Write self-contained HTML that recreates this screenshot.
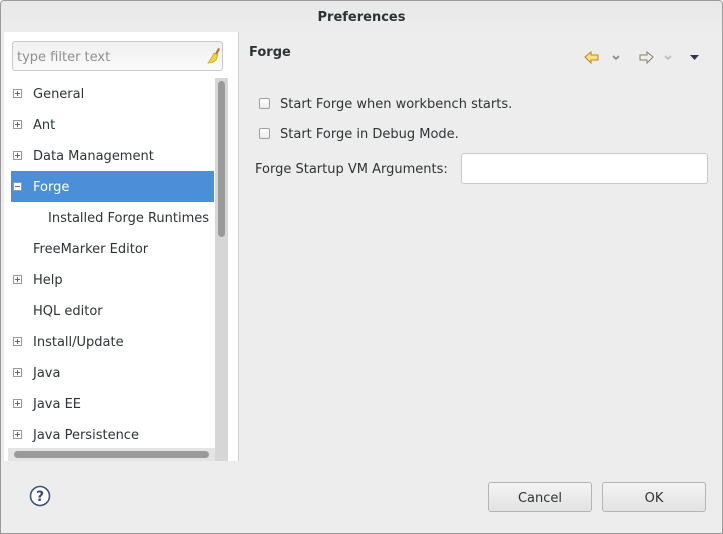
<!DOCTYPE html>
<html><head><style>
body{margin:0;width:723px;height:534px;overflow:hidden;font-family:"DejaVu Sans","Liberation Sans",sans-serif;font-size:13px;color:#2e3436}
.win{position:absolute;left:0;top:0;width:721px;height:532px;border:1px solid #9a9a9a;border-radius:4px 4px 0 0;background:#ededed;overflow:hidden}
.title{position:absolute;left:0;top:0;width:721px;height:32px;background:linear-gradient(#e8e8e8,#ededed);text-align:center;line-height:34px;font-weight:bold;font-size:13px;color:#2e3436}
.left{position:absolute;left:3px;top:31px;width:234px;height:429px;background:#fff;border-right:1px solid #d0d0d0}
.filter{position:absolute;left:8px;top:9px;width:211px;height:30px;border:1px solid #c8c8c8;border-radius:3px;background:linear-gradient(#f0f0f0,#fafafa);color:#909090;line-height:31px;padding-left:4px;box-sizing:border-box;font-size:13px}
.row{position:absolute;left:7px;width:203px;height:31px;line-height:33px;white-space:nowrap;overflow:hidden}
.row.sel{background:#4a90d9;color:#fff}
.pm{position:absolute;left:2px;top:11px;width:9px;height:9px;border:1px solid #9a9a9a;box-sizing:border-box;background:#fff}
.pm:before{content:"";position:absolute;left:1px;top:3px;width:5px;height:1px;background:#666}
.pm.p:after{content:"";position:absolute;left:3px;top:1px;width:1px;height:5px;background:#666}
.vs{position:absolute;left:211px;top:46px;width:13px;height:383px;background:#d6d6d6}
.vt{position:absolute;left:3px;top:3px;width:7px;height:156px;border-radius:4px;background:#9a9a9a}
.hs{position:absolute;left:4px;top:416px;width:207px;height:13px;background:#e4e4e4}
.ht{position:absolute;left:6px;top:3px;width:195px;height:7px;border-radius:4px;background:#9a9a9a}
.cb{position:absolute;left:259px;width:11px;height:11px;border:1px solid #a0a0a0;border-radius:2px;background:linear-gradient(#fff,#ececec);box-sizing:border-box}
.btn{position:absolute;top:481px;width:104px;height:30px;border:1px solid #b4b4b4;border-radius:3px;background:linear-gradient(#f4f4f4,#e2e2e2);text-align:center;line-height:31px;box-sizing:border-box}
.t{position:absolute}
</style></head><body>
<div class="win">
<div class="title">Preferences</div>
<div class="left">
<div class="filter">type filter text</div>
<svg style="position:absolute;left:202px;top:15px" width="16" height="18" viewBox="0 0 16 18"><path d="M12 1l2 1-3 6-2-1z" fill="#a87a2a"/><path d="M8 6l4 2-2 5c-2 2-5 3-8 3 2-2 3-5 6-10z" fill="#f2d23a" stroke="#c8a020" stroke-width=".7"/></svg>
<div class="row" style="top:46px"><span class="pm p"></span><span class="t" style="left:22px">General</span></div>
<div class="row" style="top:77px"><span class="pm p"></span><span class="t" style="left:22px">Ant</span></div>
<div class="row" style="top:108px"><span class="pm p"></span><span class="t" style="left:22px">Data Management</span></div>
<div class="row sel" style="top:139px"><span class="pm"></span><span class="t" style="left:22px">Forge</span></div>
<div class="row" style="top:170px"><span class="t" style="left:37px">Installed Forge Runtimes</span></div>
<div class="row" style="top:201px"><span class="t" style="left:22px">FreeMarker Editor</span></div>
<div class="row" style="top:232px"><span class="pm p"></span><span class="t" style="left:22px">Help</span></div>
<div class="row" style="top:263px"><span class="t" style="left:22px">HQL editor</span></div>
<div class="row" style="top:294px"><span class="pm p"></span><span class="t" style="left:22px">Install/Update</span></div>
<div class="row" style="top:325px"><span class="pm p"></span><span class="t" style="left:22px">Java</span></div>
<div class="row" style="top:356px"><span class="pm p"></span><span class="t" style="left:22px">Java EE</span></div>
<div class="row" style="top:387px"><span class="pm p"></span><span class="t" style="left:22px">Java Persistence</span></div>
<div class="vs"><div class="vt"></div></div>
<div class="hs"><div class="ht"></div></div>
</div>
<div style="position:absolute;left:248px;top:44px;font-weight:bold">Forge</div>
<svg style="position:absolute;left:583px;top:49px" width="120" height="16" viewBox="0 0 120 16">
<path d="M1 7l6-5v3h7v5H7v3z" fill="#fbe08a" stroke="#c08a10"/>
<path d="M29 6l3 3 3-3" fill="none" stroke="#888" stroke-width="1.6"/>
<path d="M69 7l-6-5v3h-7v5h7v3z" fill="#eee" stroke="#8a8060"/>
<path d="M81 6l3 3 3-3" fill="none" stroke="#bbb" stroke-width="1.6"/>
<path d="M106 5h9l-4.5 5z" fill="#333355"/>
</svg>
<div class="cb" style="top:97px;left:258px"></div><div class="t" style="left:279px;top:96px">Start Forge when workbench starts.</div>
<div class="cb" style="top:127px;left:258px"></div><div class="t" style="left:279px;top:126px">Start Forge in Debug Mode.</div>
<div class="t" style="left:254px;top:161px">Forge Startup VM Arguments:</div>
<div style="position:absolute;left:460px;top:152px;width:247px;height:31px;border:1px solid #c8c8c8;border-radius:3px;background:#fff;box-sizing:border-box"></div>
<svg style="position:absolute;left:28px;top:484px" width="22" height="22" viewBox="0 0 22 22"><circle cx="11" cy="11" r="9.5" fill="#fff" stroke="#3a4a7a" stroke-width="1.5"/><text x="11" y="16" text-anchor="middle" font-family="DejaVu Sans" font-weight="bold" font-size="14" fill="#3a4a7a">?</text></svg>
<div class="btn" style="left:487px">Cancel</div>
<div class="btn" style="left:601px">OK</div>
</div>
</body></html>
